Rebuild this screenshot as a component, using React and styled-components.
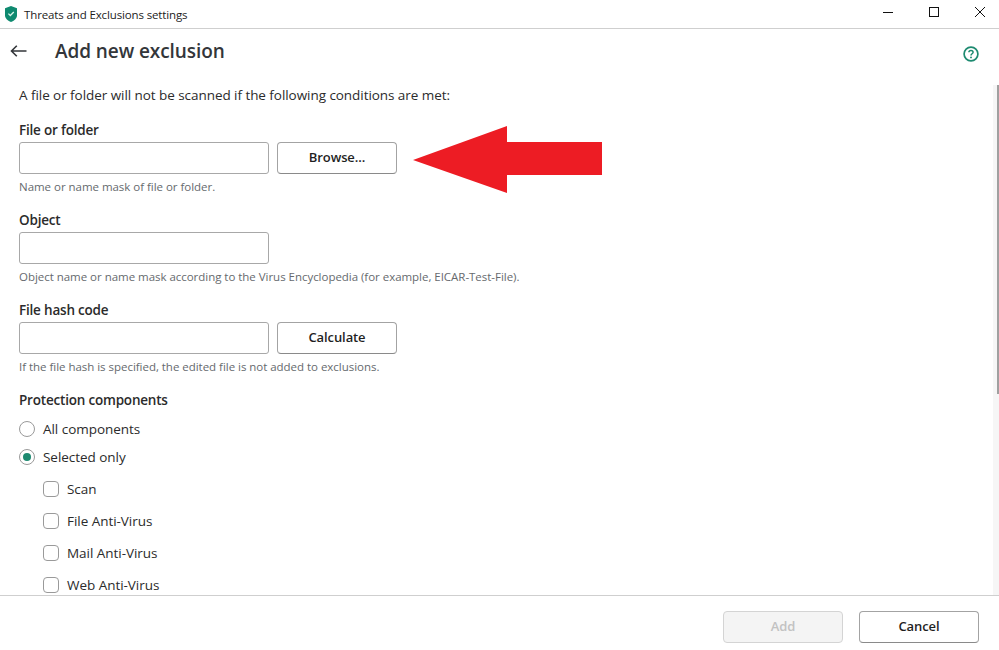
import React from 'react';
import styled, { createGlobalStyle } from 'styled-components';

const GlobalStyle = createGlobalStyle`
  html, body {
    margin: 0;
    padding: 0;
    background: #fff;
    overflow: hidden;
  }
  * {
    box-sizing: border-box;
  }
`;

const Window = styled.div`
  position: relative;
  display: flex;
  flex-direction: column;
  width: 999px;
  height: 650px;
  background: #fff;
  color: #2b2b2b;
  font-family: "Open Sans", "Noto Sans", sans-serif;
  font-size: 13.5px;
  overflow: hidden;
`;

const TitleBar = styled.div`
  display: flex;
  align-items: center;
  flex: none;
  height: 29px;
  padding-left: 5px;
  border-bottom: 1px solid #cfcfcf;
`;

const WindowTitle = styled.span`
  margin-left: 7px;
  font-size: 11.5px;
  color: #1c1c1c;
  letter-spacing: -0.13px;
`;

const WindowControls = styled.div`
  display: flex;
  align-self: flex-start;
  margin-left: auto;
  margin-right: -4px;
`;

const WindowControl = styled.div`
  display: grid;
  place-items: center;
  width: 46px;
  height: 24px;
`;

const Header = styled.div`
  display: flex;
  align-items: center;
  flex: none;
  height: 46px;
  padding: 0 20px 2px 10px;
`;

const BackButton = styled.div`
  display: grid;
  place-items: center;
  width: 17px;
  height: 14px;
  margin-right: 28px;
`;

const Title = styled.h1`
  margin: 0;
  font-size: 19px;
  font-weight: 600;
  color: #33363a;
  letter-spacing: -0.08px;
`;

const HelpButton = styled.div`
  align-self: flex-start;
  margin-top: 17px;
  margin-left: auto;
  width: 16px;
  height: 16px;
`;

const Content = styled.div`
  flex: 1;
  min-height: 0;
  overflow: hidden;
  padding: 10px 19px 0;
`;

const Intro = styled.p`
  margin: 0 0 15px;
  height: 20px;
  line-height: 20px;
  letter-spacing: -0.055px;
`;

const Field = styled.div`
  margin-bottom: 15px;
`;

const Label = styled.div`
  height: 20px;
  line-height: 20px;
  font-weight: 600;
  margin-bottom: ${({ $loose }) => ($loose ? '5px' : '2px')};
  letter-spacing: -0.2px;
`;

const Row = styled.div`
  display: flex;
  gap: 8px;
`;

const Input = styled.input`
  display: block;
  width: 250px;
  height: 32px;
  padding: 0 8px;
  border: 1px solid #a8a8a8;
  border-radius: 3px;
  background: #fff;
  outline: none;
`;

const Button = styled.button`
  width: 120px;
  height: 32px;
  padding: 0 0 2px;
  border: 1px solid ${({ disabled }) => (disabled ? '#d4d4d4' : '#a3a3a3')};
  border-bottom-color: ${({ disabled }) => (disabled ? '#d4d4d4' : '#8a8a8a')};
  border-radius: 4px;
  background: ${({ disabled }) => (disabled ? '#f4f4f4' : '#fff')};
  color: ${({ disabled }) => (disabled ? '#c2c2c2' : '#1f1f1f')};
  font-family: inherit;
  font-size: 13px;
  font-weight: 600;
  letter-spacing: -0.1px;
`;

const Hint = styled.div`
  height: 16px;
  margin-top: 5px;
  line-height: 16px;
  font-size: 11.5px;
  color: #666a6e;
  letter-spacing: -0.03px;
`;

const Option = styled.div`
  display: flex;
  align-items: center;
  gap: 8px;
  height: ${({ $nested }) => ($nested ? '32px' : '28px')};
  padding-left: ${({ $nested }) => ($nested ? '24px' : '0')};
  letter-spacing: -0.04px;
`;

const NestedOptions = styled.div`
  padding-top: 2px;
`;

const Radio = styled.span`
  display: grid;
  place-items: center;
  width: 16px;
  height: 16px;
  border: 1px solid #9a9a9a;
  border-radius: 50%;
  &::after {
    content: '';
    display: ${({ $checked }) => ($checked ? 'block' : 'none')};
    width: 8px;
    height: 8px;
    border-radius: 50%;
    background: #1d8a70;
  }
`;

const Checkbox = styled.span`
  width: 16px;
  height: 16px;
  border: 1px solid #9a9a9a;
  border-radius: 4px;
`;

const Footer = styled.div`
  display: flex;
  justify-content: flex-end;
  gap: 16px;
  flex: none;
  height: 55px;
  padding: 15px 20px 0 0;
  border-top: 1px solid #cfcfcf;
`;

const ScrollTrack = styled.div`
  position: absolute;
  top: 85px;
  right: 0;
  width: 6px;
  height: 510px;
  background: #f6f6f6;
`;

const ScrollThumb = styled.div`
  position: absolute;
  top: 0;
  right: 0;
  width: 2px;
  height: 309px;
  background: #a0a0a0;
`;

const RedArrow = styled.svg`
  position: absolute;
  left: 413px;
  top: 126px;
`;

const ShieldIcon = () => (
  <svg width="12" height="16" viewBox="0 0 12 16">
    <path d="M6 0 L12 2.2 V9.5 C12 12.4 9 14.8 6 16 C3 14.8 0 12.4 0 9.5 V2.2 Z" fill="#0f8a70" />
    <path d="M3.4 7.6 L5.3 9.5 L8.8 6" fill="none" stroke="#d8f5ea" strokeWidth="1.3" />
  </svg>
);

const components = ['Scan', 'File Anti-Virus', 'Mail Anti-Virus', 'Web Anti-Virus'];

function App() {
  return (
    <Window>
      <GlobalStyle />
      <TitleBar>
        <ShieldIcon />
        <WindowTitle>Threats and Exclusions settings</WindowTitle>
        <WindowControls>
          <WindowControl>
            <svg width="10" height="10" viewBox="0 0 10 10">
              <path d="M0 5.5 H10" stroke="#111" strokeWidth="1" />
            </svg>
          </WindowControl>
          <WindowControl>
            <svg width="10" height="10" viewBox="0 0 10 10">
              <rect x="0.5" y="0.5" width="9" height="9" fill="none" stroke="#111" strokeWidth="1" />
            </svg>
          </WindowControl>
          <WindowControl>
            <svg width="10" height="10" viewBox="0 0 10 10">
              <path d="M0 0 L10 10 M10 0 L0 10" stroke="#111" strokeWidth="1" />
            </svg>
          </WindowControl>
        </WindowControls>
      </TitleBar>

      <Header>
        <BackButton>
          <svg width="17" height="14" viewBox="0 0 17 14">
            <path d="M16.5 7 H1.5 M6.8 1.7 L1.5 7 L6.8 12.3" fill="none" stroke="#33363a" strokeWidth="1.6" />
          </svg>
        </BackButton>
        <Title>Add new exclusion</Title>
        <HelpButton>
          <svg width="16" height="16" viewBox="0 0 16 16">
            <circle cx="8" cy="8" r="6.9" fill="none" stroke="#1d8a70" strokeWidth="1.7" />
            <path d="M5.9 6.3 C5.9 3.9 10.1 3.9 10.1 6.3 C10.1 7.8 8 7.7 8 9.4" fill="none" stroke="#1d8a70" strokeWidth="1.5" />
            <circle cx="8" cy="11.4" r="0.95" fill="#1d8a70" />
          </svg>
        </HelpButton>
      </Header>

      <Content>
        <Intro>A file or folder will not be scanned if the following conditions are met:</Intro>

        <Field>
          <Label>File or folder</Label>
          <Row>
            <Input />
            <Button>Browse...</Button>
          </Row>
          <Hint>Name or name mask of file or folder.</Hint>
        </Field>

        <Field>
          <Label>Object</Label>
          <Input />
          <Hint>Object name or name mask according to the Virus Encyclopedia (for example, EICAR-Test-File).</Hint>
        </Field>

        <Field>
          <Label>File hash code</Label>
          <Row>
            <Input />
            <Button>Calculate</Button>
          </Row>
          <Hint>If the file hash is specified, the edited file is not added to exclusions.</Hint>
        </Field>

        <Label $loose>Protection components</Label>
        <Option>
          <Radio />
          All components
        </Option>
        <Option>
          <Radio $checked />
          Selected only
        </Option>
        <NestedOptions>
          {components.map((name) => (
            <Option $nested key={name}>
              <Checkbox />
              {name}
            </Option>
          ))}
        </NestedOptions>
      </Content>

      <Footer>
        <Button disabled>Add</Button>
        <Button>Cancel</Button>
      </Footer>

      <ScrollTrack>
        <ScrollThumb />
      </ScrollTrack>

      <RedArrow width="189" height="67" viewBox="0 0 189 67">
        <path d="M0 34 L94 0 V16 H189 V49 H94 V67 Z" fill="#ed1c24" />
      </RedArrow>
    </Window>
  );
}

export default App;
